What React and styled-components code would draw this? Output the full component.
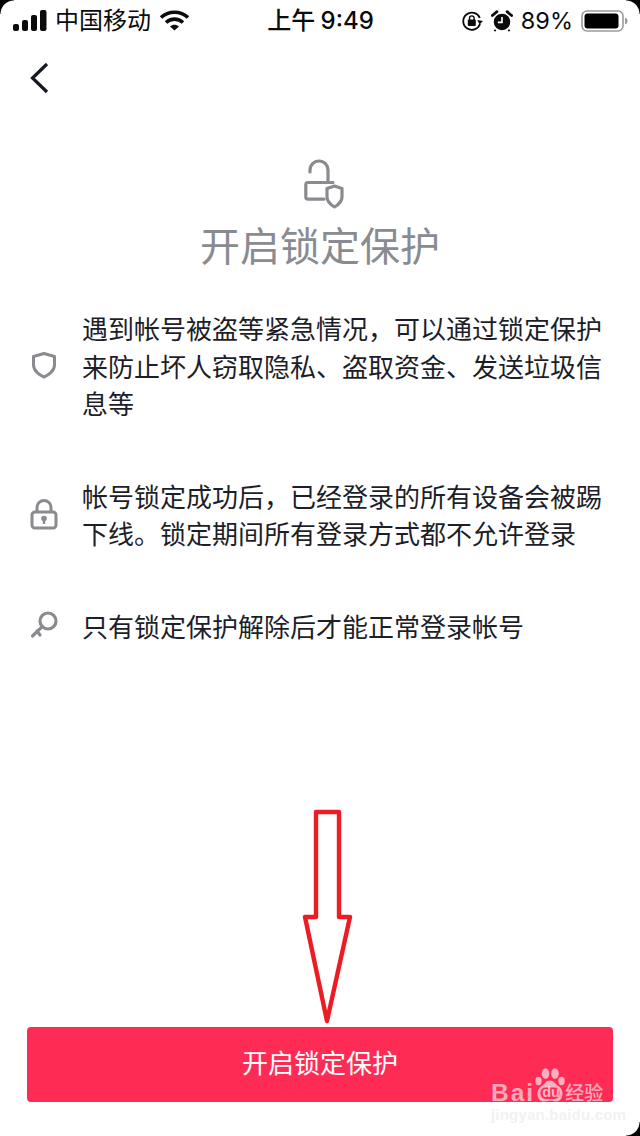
import React from "react";
import styled, { createGlobalStyle } from "styled-components";

const GlobalStyle = createGlobalStyle`
  html, body {
    margin: 0;
    padding: 0;
    background: #fff;
  }
  * {
    box-sizing: border-box;
  }
`;

const FONT = `"Noto Sans CJK SC", "Liberation Sans", sans-serif`;
const UI_FONT = `Inter, "Noto Sans CJK SC", sans-serif`;

const Page = styled.div`
  position: relative;
  width: 640px;
  height: 1136px;
  overflow: hidden;
  background: #fff;
  font-family: ${FONT};
  color: #1d1e28;
  display: flex;
  flex-direction: column;
`;

const StatusBar = styled.div`
  height: 40px;
  flex: none;
  display: grid;
  grid-template-columns: 1fr auto 1fr;
  align-items: center;
  padding: 1px 12px 0 13px;
  color: #0b0b0b;
`;

const StatusSide = styled.div`
  display: flex;
  align-items: center;
  gap: ${(p) => p.$gap || 8}px;
  justify-content: ${(p) => (p.$end ? "flex-end" : "flex-start")};
`;

const StatusText = styled.span`
  font-size: ${(p) => p.$size || 24}px;
  line-height: 30px;
  white-space: nowrap;
  font-family: ${UI_FONT};
`;

const Clock = styled(StatusText)`
  font-weight: 500;
  word-spacing: -1px;
`;

const BackRow = styled.div`
  height: 118px;
  flex: none;
  padding: 22px 0 0 30px;
`;

const Hero = styled.div`
  display: flex;
  flex-direction: column;
  align-items: center;
  flex: none;
`;

const Title = styled.h1`
  margin: -1px 0 0;
  font-size: 40px;
  line-height: 70px;
  font-weight: 400;
  color: #8a8b91;
`;

const InfoList = styled.div`
  display: flex;
  flex-direction: column;
  margin-top: 30px;
  padding: 0 30px;
`;

const InfoRow = styled.div`
  display: flex;
  align-items: center;
  gap: 24px;
  margin-bottom: ${(p) => p.$after || 0}px;
`;

const InfoIcon = styled.svg`
  width: 28px;
  height: ${(p) => p.$height || 28}px;
  flex: none;
`;

const InfoText = styled.p`
  margin: 0;
  width: 524px;
  font-size: 26px;
  line-height: 37.5px;
`;

const Cta = styled.button`
  margin: auto 27px 34px;
  height: 75px;
  flex: none;
  border: none;
  border-radius: 4px;
  padding: 0 0 6px;
  background: #fe2c55;
  color: #fff;
  font-family: ${FONT};
  font-size: 26px;
`;

const Arrow = styled.svg`
  position: absolute;
  left: 300px;
  top: 805px;
  width: 56px;
  height: 225px;
`;

const Corner = styled.div`
  position: absolute;
  width: 14px;
  height: 14px;
  ${(p) => (p.$bottom ? "bottom: 0;" : "top: 0;")}
  ${(p) => (p.$right ? "right: 0;" : "left: 0;")}
  background: radial-gradient(
    circle at ${(p) => (p.$right ? "0" : "100%")} ${(p) => (p.$bottom ? "0" : "100%")},
    transparent 13px,
    #000 14px
  );
`;

const Watermark = styled.div`
  position: absolute;
  left: 491px;
  top: 1068px;
  width: 125px;
  color: rgba(255, 255, 255, 0.62);
  font-family: "Liberation Sans", "Noto Sans CJK SC", sans-serif;
`;

const MarkRow = styled.div`
  display: flex;
  align-items: flex-end;
  height: 34px;
`;

const MarkWord = styled.span`
  font-size: 24.5px;
  font-weight: 700;
  line-height: 19px;
  height: 19px;
  letter-spacing: 2px;
`;

const MarkCn = styled.span`
  font-family: ${FONT};
  font-size: 19px;
  line-height: 20px;
  height: 20px;
  font-weight: 500;
`;

const MarkUrl = styled.div`
  margin-top: 5px;
  font-size: 15px;
  font-weight: 700;
  line-height: 16px;
  white-space: nowrap;
  letter-spacing: 0.2px;
  color: rgba(225, 225, 225, 0.45);
`;

const PawWrap = styled.div`
  position: relative;
  width: 30px;
  height: 34px;
  flex: none;
`;

const PawSvg = styled.svg`
  position: absolute;
  inset: 0;
`;

const PawLabel = styled.span`
  position: absolute;
  left: 7px;
  bottom: 3px;
  font-size: 14.5px;
  line-height: 14px;
  font-weight: 700;
  color: rgba(255, 255, 255, 0.66);
`;

const SignalIcon = () => (
  <svg width="34" height="22" viewBox="0 0 34 22" fill="#0b0b0b">
    <rect x="0" y="14" width="6" height="7" rx="2" />
    <rect x="9" y="10" width="6" height="11" rx="2" />
    <rect x="18" y="5" width="6" height="16" rx="2" />
    <rect x="27" y="0" width="6.5" height="21" rx="2" />
  </svg>
);

const WifiIcon = () => (
  <svg width="31" height="22" viewBox="0 0 30 22" fill="none" stroke="#0b0b0b" strokeWidth="3.6">
    <path d="M1.5 7.5 C9 0.5 21 0.5 28.5 7.5" />
    <path d="M6.5 12.5 C11.5 8 18.5 8 23.5 12.5" />
    <path d="M10.5 16.5 L15 20.5 L19.5 16.5 C16.5 14 13.5 14 10.5 16.5Z" fill="#0b0b0b" stroke="none" />
  </svg>
);

const RotationLockIcon = () => (
  <svg width="22" height="22" viewBox="0 0 22 22" fill="none">
    <path d="M18.8 8 A8.6 8.6 0 1 0 19 14" stroke="#0b0b0b" strokeWidth="1.8" />
    <path d="M16 10.5 L22 10.5 L19 14.5Z" fill="#0b0b0b" transform="rotate(8 19 12)" />
    <rect x="6.8" y="9.6" width="8" height="6.4" rx="1" fill="#0b0b0b" />
    <path d="M8.5 10 V8.2 a2.3 2.3 0 0 1 4.6 0 V10" stroke="#0b0b0b" strokeWidth="1.4" />
  </svg>
);

const AlarmIcon = () => (
  <svg width="22" height="22" viewBox="0 0 24 24" fill="none">
    <circle cx="12" cy="13" r="9" fill="#0b0b0b" />
    <path d="M12 7.5 V13.5 H7.5" stroke="#fff" strokeWidth="1.8" />
    <path d="M1.5 6 L6.5 1.8 M22.5 6 L17.5 1.8" stroke="#0b0b0b" strokeWidth="3" strokeLinecap="round" />
    <path d="M5 21.5 L3.8 23 M19 21.5 L20.2 23" stroke="#0b0b0b" strokeWidth="2" />
  </svg>
);

const BatteryIcon = () => (
  <svg width="47" height="22" viewBox="0 0 47 22">
    <rect x="1" y="1" width="41" height="20" rx="5" fill="none" stroke="#9a9a9a" strokeWidth="1.6" />
    <rect x="3.5" y="3.5" width="34" height="15" rx="3" fill="#000" />
    <path d="M44 7.5 C46 8.2 46.5 9.5 46.5 11 C46.5 12.5 46 13.8 44 14.5Z" fill="#9a9a9a" />
  </svg>
);

const BackIcon = () => (
  <svg width="20" height="32" viewBox="0 0 20 32" fill="none">
    <path d="M17 2 L2.5 16 L17 30" stroke="#161823" strokeWidth="3.2" />
  </svg>
);

const HeroIcon = () => (
  <svg width="50" height="52" viewBox="0 0 50 52" fill="none" stroke="#8a8b91" strokeWidth="3.2" strokeLinecap="round" strokeLinejoin="round">
    <path d="M15 14 V12 a9 9 0 0 1 18 0 V24" />
    <path d="M38 24.5 H13 a2.2 2.2 0 0 0 -2.2 2.2 V39 a2.2 2.2 0 0 0 2.2 2.2 H29" />
    <path d="M39.5 28 L47 30.5 V39 C47 44 42 47.5 39.5 49 C37 47.5 32 44 32 39 V30.5Z" />
  </svg>
);

const ShieldIcon = () => (
  <InfoIcon viewBox="0 0 28 28" fill="none" stroke="#8a8b91" strokeWidth="3" strokeLinejoin="round">
    <path d="M14 2.5 L24.5 5.5 V14 C24.5 20 18 24.5 14 26 C10 24.5 3.5 20 3.5 14 V5.5Z" />
  </InfoIcon>
);

const LockIcon = () => (
  <InfoIcon viewBox="0 0 28 32" fill="none" $height={32}>
    <path d="M7 14 V9.5 a7 7 0 0 1 14 0 V14" stroke="#8a8b91" strokeWidth="3" />
    <rect x="2" y="14" width="24" height="16" rx="3" stroke="#8a8b91" strokeWidth="3" />
    <circle cx="14" cy="20.5" r="2.8" fill="#8a8b91" />
    <rect x="12.8" y="21" width="2.4" height="5" fill="#8a8b91" />
  </InfoIcon>
);

const KeyIcon = () => (
  <InfoIcon viewBox="0 0 28 28" fill="none" stroke="#8a8b91" strokeWidth="3.2" strokeLinecap="round">
    <circle cx="18" cy="10" r="8" />
    <path d="M12.3 15.7 L2.5 25 M7 20 L10 24" />
  </InfoIcon>
);

const BaiduPaw = () => (
  <PawSvg width="30" height="34" viewBox="0 0 30 34" fill="#ffb0c0">
    <ellipse cx="10.5" cy="5.5" rx="3.8" ry="5.2" />
    <ellipse cx="20" cy="5.5" rx="3.8" ry="5.2" />
    <ellipse cx="3.5" cy="13" rx="3.2" ry="4.2" />
    <ellipse cx="26.5" cy="13" rx="3.2" ry="4.2" />
    <path d="M15 12.5 C19 12.5 20 16 24 18.5 C29.5 22 28.5 33.5 21 33.5 C18.5 33.5 17 32.5 15 32.5 C13 32.5 11.5 33.5 9 33.5 C1.5 33.5 0.5 22 6 18.5 C10 16 11 12.5 15 12.5Z" />
    <rect x="5.5" y="19.5" width="19" height="11.5" rx="5" fill="#fe2c55" />
  </PawSvg>
);

const infoItems = [
  {
    icon: <ShieldIcon />,
    text: "遇到帐号被盗等紧急情况，可以通过锁定保护来防止坏人窃取隐私、盗取资金、发送垃圾信息等",
    after: 55,
  },
  {
    icon: <LockIcon />,
    text: "帐号锁定成功后，已经登录的所有设备会被踢下线。锁定期间所有登录方式都不允许登录",
    after: 55,
  },
  {
    icon: <KeyIcon />,
    text: "只有锁定保护解除后才能正常登录帐号",
    after: 0,
  },
];

export default function App() {
  return (
    <Page>
      <GlobalStyle />
      <StatusBar>
        <StatusSide>
          <SignalIcon />
          <StatusText>中国移动</StatusText>
          <WifiIcon />
        </StatusSide>
        <Clock>上午 9:49</Clock>
        <StatusSide $end>
          <RotationLockIcon />
          <AlarmIcon />
          <StatusText $size={23.5}>89%</StatusText>
          <BatteryIcon />
        </StatusSide>
      </StatusBar>

      <BackRow>
        <BackIcon />
      </BackRow>

      <Hero>
        <HeroIcon />
        <Title>开启锁定保护</Title>
      </Hero>

      <InfoList>
        {infoItems.map((item) => (
          <InfoRow key={item.text} $after={item.after}>
            {item.icon}
            <InfoText>{item.text}</InfoText>
          </InfoRow>
        ))}
      </InfoList>

      <Cta>开启锁定保护</Cta>

      <Arrow viewBox="300 805 56 225" fill="none">
        <path
          d="M316 812 H339 V917 H350 L327 1021 L305 917 H316Z"
          stroke="#ed1c24"
          strokeWidth="4.4"
          strokeLinejoin="round"
        />
      </Arrow>

      <Watermark>
        <MarkRow>
          <MarkWord>Bai</MarkWord>
          <PawWrap>
            <BaiduPaw />
            <PawLabel>du</PawLabel>
          </PawWrap>
          <MarkCn>经验</MarkCn>
        </MarkRow>
        <MarkUrl>jingyan.baidu.com</MarkUrl>
      </Watermark>

      <Corner />
      <Corner $right />
      <Corner $bottom $right />
    </Page>
  );
}
